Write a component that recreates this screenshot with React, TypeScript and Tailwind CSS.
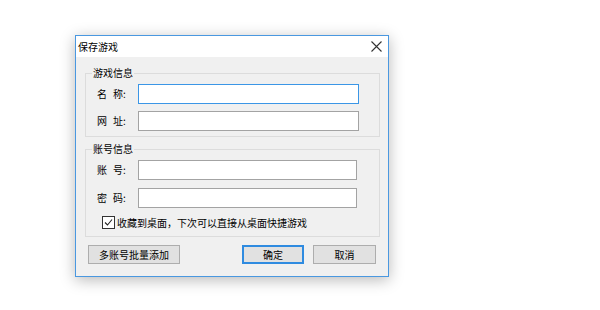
import React from "react";

const font = { fontFamily: '"Noto Sans CJK SC", "Noto Sans", sans-serif' };

function Field({ label, width, focused }: { label: [string, string]; width: string; focused?: boolean }) {
  return (
    <div className="flex items-center h-[20px]">
      <div className="w-[41px] flex text-[10px] leading-[20px] text-black">
        <span>{label[0]}</span>
        <span className="ml-[6px]">{label[1]}:</span>
      </div>
      <div
        className={
          focused
            ? `${width} h-[20px] bg-white border border-[#3b96e6]`
            : `${width} h-[20px] bg-white border border-[#a3a3a3]`
        }
      />
    </div>
  );
}

export default function App() {
  return (
    <div className="w-[600px] h-[310px] bg-white pt-[35px] pl-[75px]" style={font}>
      <div className="w-[314px] h-[242px] border border-[#4a98e0] bg-[#f0f0f0] flex flex-col shadow-[0_3px_14px_rgba(0,0,0,0.28)]">
        {/* Title bar */}
        <div className="h-[21px] bg-white flex items-center justify-between pl-[2px] pr-[6px]">
          <span className="text-[10px] text-black leading-none">保存游戏</span>
          <svg width="11" height="11" viewBox="0 0 11 11" className="text-[#333]">
            <path d="M0.5 0.5 L10.5 10.5 M10.5 0.5 L0.5 10.5" stroke="currentColor" strokeWidth="1.1" />
          </svg>
        </div>

        {/* Body */}
        <div className="flex-1 flex flex-col">
          {/* 游戏信息 */}
          <div className="relative mt-[16px] ml-[9px] w-[295px] h-[64px] border border-[#dcdcdc] pt-[10px] pl-[11px] flex flex-col gap-[7px]">
            <span className="absolute -top-[8px] left-[6px] px-[1px] bg-[#f0f0f0] text-[10px] leading-[14px] text-black">游戏信息</span>
            <Field label={["名", "称"]} width="w-[221px]" focused />
            <Field label={["网", "址"]} width="w-[221px]" />
          </div>

          {/* 账号信息 */}
          <div className="relative mt-[12px] ml-[9px] w-[295px] h-[88px] border border-[#dcdcdc] pt-[10px] pl-[11px] flex flex-col gap-[8px]">
            <span className="absolute -top-[8px] left-[6px] px-[1px] bg-[#f0f0f0] text-[10px] leading-[14px] text-black">账号信息</span>
            <Field label={["账", "号"]} width="w-[219px]" />
            <Field label={["密", "码"]} width="w-[219px]" />
            <div className="flex items-center h-[13px] ml-[5px]">
              <div className="w-[13px] h-[13px] border border-[#333] bg-white flex items-center justify-center">
                <svg width="9" height="9" viewBox="0 0 9 9">
                  <path d="M1 4.5 L3.5 7 L8 1.5" fill="none" stroke="#222" strokeWidth="1.1" />
                </svg>
              </div>
              <span className="ml-[2px] text-[10px] leading-none text-black">收藏到桌面，下次可以直接从桌面快捷游戏</span>
            </div>
          </div>

          {/* Buttons */}
          <div className="mt-[8px] flex items-center pl-[12px] pr-[12px]">
            <button type="button" className="w-[92px] h-[19px] bg-[#e1e1e1] border border-[#adadad] text-[10px] leading-none text-black">
              多账号批量添加
            </button>
            <div className="flex-1" />
            <button type="button" className="w-[62px] h-[19px] bg-[#e1e1e1] border-2 border-[#2f8be0] text-[10px] leading-none text-black">
              确定
            </button>
            <button type="button" className="ml-[9px] w-[63px] h-[19px] bg-[#e1e1e1] border border-[#adadad] text-[10px] leading-none text-black">
              取消
            </button>
          </div>
        </div>
      </div>
    </div>
  );
}
